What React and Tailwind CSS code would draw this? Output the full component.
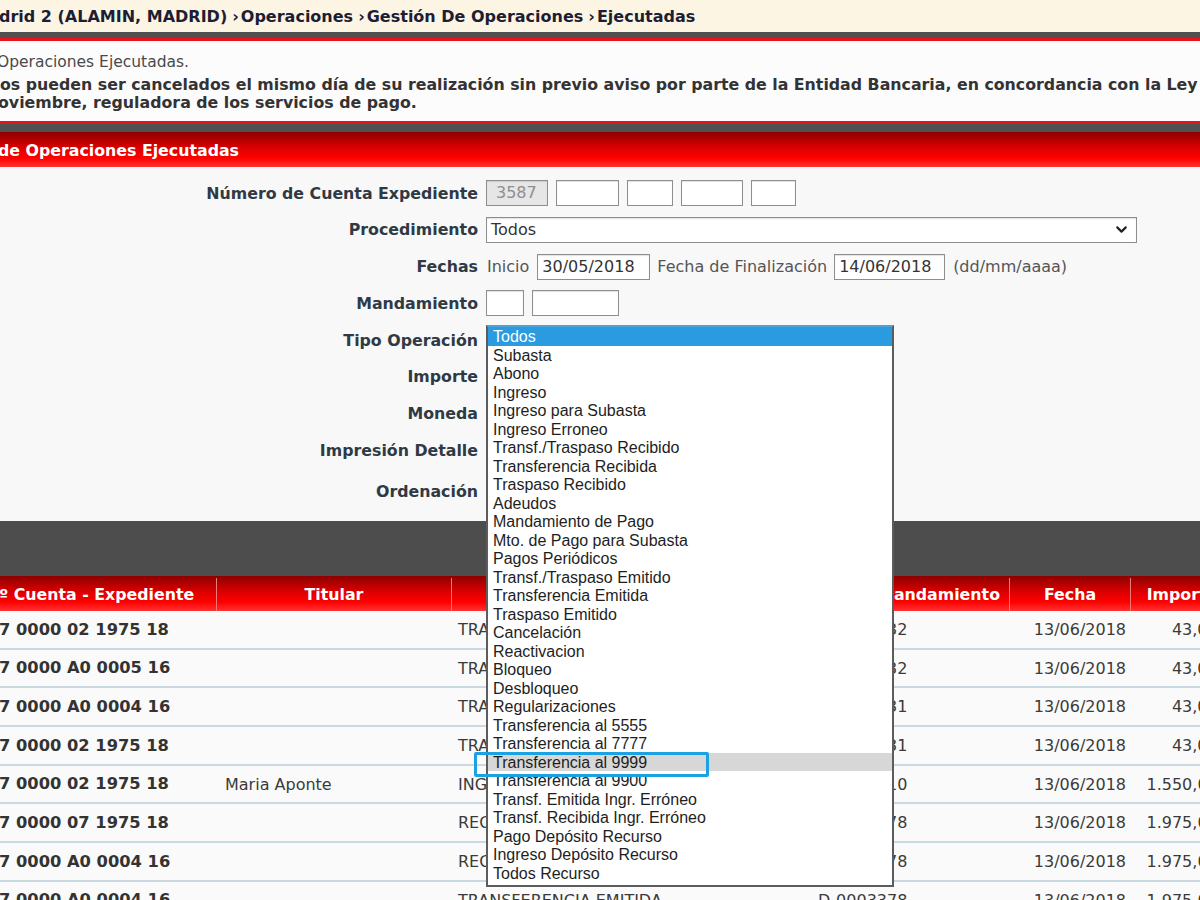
import React from "react";
import { ChevronDown } from "lucide-react";

const tipos = [
  "Todos",
  "Subasta",
  "Abono",
  "Ingreso",
  "Ingreso para Subasta",
  "Ingreso Erroneo",
  "Transf./Traspaso Recibido",
  "Transferencia Recibida",
  "Traspaso Recibido",
  "Adeudos",
  "Mandamiento de Pago",
  "Mto. de Pago para Subasta",
  "Pagos Periódicos",
  "Transf./Traspaso Emitido",
  "Transferencia Emitida",
  "Traspaso Emitido",
  "Cancelación",
  "Reactivacion",
  "Bloqueo",
  "Desbloqueo",
  "Regularizaciones",
  "Transferencia al 5555",
  "Transferencia al 7777",
  "Transferencia al 9999",
  "Transferencia al 9900",
  "Transf. Emitida Ingr. Erróneo",
  "Transf. Recibida Ingr. Erróneo",
  "Pago Depósito Recurso",
  "Ingreso Depósito Recurso",
  "Todos Recurso",
];

const filas = [
  ["7 0000 02 1975 18", "", "TRANSFERENCIA EMITIDA", "D-0003332", "13/06/2018", "43,00 €"],
  ["7 0000 A0 0005 16", "", "TRANSFERENCIA EMITIDA", "D-0003332", "13/06/2018", "43,00 €"],
  ["7 0000 A0 0004 16", "", "TRANSFERENCIA EMITIDA", "D-0003331", "13/06/2018", "43,00 €"],
  ["7 0000 02 1975 18", "", "TRANSFERENCIA EMITIDA", "D-0003331", "13/06/2018", "43,00 €"],
  ["7 0000 02 1975 18", "Maria Aponte", "INGRESO", "D-0003310", "13/06/2018", "1.550,00 €"],
  ["7 0000 07 1975 18", "", "RECIBIDA", "D-0003378", "13/06/2018", "1.975,00 €"],
  ["7 0000 A0 0004 16", "", "RECIBIDA", "D-0003378", "13/06/2018", "1.975,00 €"],
  ["7 0000 A0 0004 16", "", "TRANSFERENCIA EMITIDA", "D-0003378", "13/06/2018", "1.975,00 €"],
];

const inputCls =
  "h-[26px] border border-[#8e8e8e] bg-white shadow-[inset_0_1px_1px_rgba(0,0,0,0.12)] px-[4px] flex items-center text-[16px] text-[#333]";

function Label({ children, tall }) {
  return (
    <div className={`flex items-center justify-end pr-[8px] font-bold text-[15.8px] text-[#2f3a44] ${tall ? "h-[40.75px] pt-[5px]" : "h-[36.75px] pt-[1px]"}`}>
      {children}
    </div>
  );
}

function Field({ children, tall }) {
  return (
    <div className={`flex items-center gap-[8px] ${tall ? "h-[40.75px] pt-[4px]" : "h-[36.75px]"}`}>{children}</div>
  );
}

export default function App() {
  return (
    <div className="relative w-[1200px] h-[900px] overflow-hidden bg-white font-['DejaVu_Sans',Verdana,sans-serif]">
      {/* breadcrumb */}
      <div className="h-[32px] bg-[#fcf5e4] flex items-center pt-[1px] whitespace-nowrap text-[16px] font-bold text-[#1d1d33] -ml-[1px]">
        <span>drid 2 (ALAMIN, MADRID)</span>
        <span className="ml-[5px] mr-[2px]">›</span>
        <span>Operaciones</span>
        <span className="ml-[5px] mr-[2px]">›</span>
        <span>Gestión De Operaciones</span>
        <span className="ml-[5px] mr-[2px]">›</span>
        <span>Ejecutadas</span>
      </div>
      <div className="h-[6px] bg-[#505050]" />
      <div className="h-[3px] bg-[#e8141a]" />

      {/* notice */}
      <div className="h-[80px] bg-[#fcfcfd] pt-[12px] whitespace-nowrap">
        <div className="text-[15.5px] leading-[18px] text-[#4a4a4a] -ml-[3px]">Operaciones Ejecutadas.</div>
        <div className="mt-[5px] text-[15.8px] leading-[18px] font-bold text-[#333]">
          <div>os pueden ser cancelados el mismo día de su realización sin previo aviso por parte de la Entidad Bancaria, en concordancia con la Ley</div>
          <div className="-ml-[2px]">oviembre, reguladora de los servicios de pago.</div>
        </div>
      </div>
      <div className="h-[3px] bg-[#e8141a]" />
      <div className="h-[8px] bg-[#505050]" />

      {/* section title */}
      <div className="h-[35px] bg-[linear-gradient(#8c0000,#dc0000_45%,#ff0000_75%,#ff3434)] flex items-center pt-[2px] whitespace-nowrap text-white font-bold text-[15.8px]">
        <span className="-ml-[2px]">de Operaciones Ejecutadas</span>
      </div>

      {/* filter form */}
      <div className="h-[354px] bg-[#f8f8f8] pt-[7.5px] grid grid-cols-[486px_1fr] content-start whitespace-nowrap">
        <Label>Número de Cuenta Expediente</Label>
        <Field>
          <div className={`${inputCls} w-[62px] text-[15px] px-[9px]`} style={{ background: "#e6e6e6", color: "#8f8f8f" }}>3587</div>
          <div className={`${inputCls} w-[63px]`} />
          <div className={`${inputCls} w-[46px]`} />
          <div className={`${inputCls} w-[62px]`} />
          <div className={`${inputCls} w-[45px]`} />
        </Field>

        <Label>Procedimiento</Label>
        <Field>
          <div className={`${inputCls} w-[651px] justify-between pr-[6px]`}>
            <span>Todos</span>
            <ChevronDown size={17} strokeWidth={3} className="text-[#222]" />
          </div>
        </Field>

        <Label>Fechas</Label>
        <Field>
          <div className="flex items-center pt-[1px] text-[16px] text-[#555]">
            <span className="ml-[1px] mr-[8px]">Inicio</span>
            <div className={`${inputCls} w-[113px]`}>30/05/2018</div>
            <span className="ml-[7px] mr-[7px]">Fecha de Finalización</span>
            <div className={`${inputCls} w-[111px]`}>14/06/2018</div>
            <span className="ml-[8px]">(dd/mm/aaaa)</span>
          </div>
        </Field>

        <Label>Mandamiento</Label>
        <Field>
          <div className={`${inputCls} w-[38px]`} />
          <div className={`${inputCls} w-[87px]`} />
        </Field>

        <Label>Tipo Operación</Label>
        <Field />
        <Label>Importe</Label>
        <Field />
        <Label>Moneda</Label>
        <Field />
        <Label>Impresión Detalle</Label>
        <Field />
        <Label tall>Ordenación</Label>
        <Field tall />
      </div>

      <div className="h-[55px] bg-[#4d4d4d]" />

      {/* results table */}
      <div className="w-[1233px]">
        <div className="h-[35px] flex pt-[2px] bg-[linear-gradient(#8c0000,#dc0000_45%,#ff0000_75%,#ff3434)] text-white font-bold text-[15.8px] whitespace-nowrap">
          <div className="w-[217px] border-r-[1.5px] border-[#f07878] flex items-center overflow-hidden">
            <span className="-ml-[14px]">Nº Cuenta - Expediente</span>
          </div>
          <div className="w-[235px] border-r-[1.5px] border-[#f07878] flex items-center justify-center">Titular</div>
          <div className="w-[360px] border-r-[1.5px] border-[#f07878] flex items-center justify-center">Tipo Operación</div>
          <div className="w-[198px] border-r-[1.5px] border-[#f07878] flex items-center justify-end pr-[9px]">Mandamiento</div>
          <div className="w-[121px] border-r-[1.5px] border-[#f07878] flex items-center justify-center">Fecha</div>
          <div className="w-[102px] flex items-center justify-center">Importe</div>
        </div>
        {filas.map((f, i) => (
          <div key={i} className="h-[38.7px] flex pt-[1px] border-b-2 border-[#c9d9e1] bg-[#fafafa] text-[16px] text-[#3a3a3a] whitespace-nowrap">
            <div className="w-[217px] flex items-center font-bold text-[16.3px] text-[#333] overflow-hidden">
              <span className="-ml-[1px]">{f[0]}</span>
            </div>
            <div className="w-[235px] flex items-center pl-[8px]">{f[1]}</div>
            <div className="w-[360px] flex items-center pl-[6px] overflow-hidden">{f[2]}</div>
            <div className="w-[198px] flex items-center pl-[6px]">{f[3]}</div>
            <div className="w-[121px] flex items-center justify-end pr-[5px]">{f[4]}</div>
            <div className="w-[102px] flex items-center justify-end">{f[5]}</div>
          </div>
        ))}
      </div>

      {/* open list of operation types */}
      <div className="absolute left-[486px] top-[325px] w-[408px] h-[562px] border-2 border-[#5c5c5c] border-t-[#49a3d6] bg-white font-['Liberation_Sans',Arial,sans-serif] text-[16px] text-[#1e1e1e] whitespace-nowrap">
        {tipos.map((t, i) => (
          <div
            key={t}
            className={`h-[18.5px] leading-[19.5px] pl-[5px] ${i === 0 ? "bg-[#2a9be0] text-white" : ""} ${i === 23 ? "bg-[#d7d7d7]" : ""}`}
          >
            {t}
          </div>
        ))}
      </div>

      {/* highlight frame */}
      <div className="absolute left-[474px] top-[752px] w-[235px] h-[25px] border-[3px] border-[#1ca2e3] rounded-[2px]" />
    </div>
  );
}
